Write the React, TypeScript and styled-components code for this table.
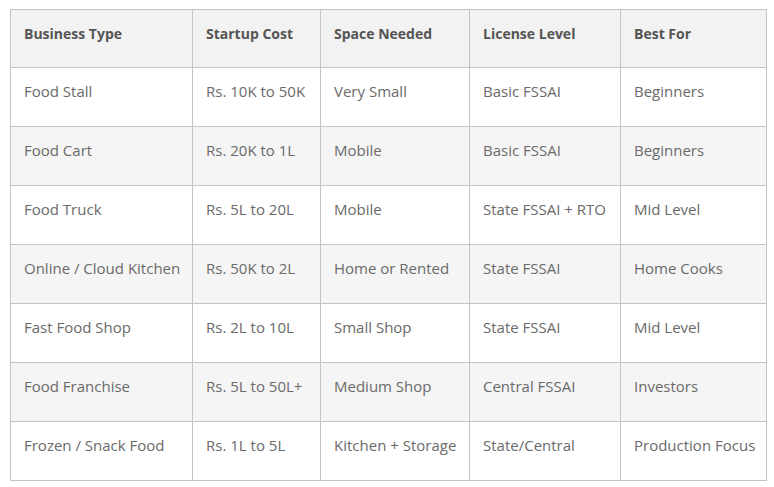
import React from 'react';
import styled, { createGlobalStyle } from 'styled-components';

const GlobalStyle = createGlobalStyle`
  body {
    margin: 0;
    background: #ffffff;
    font-family: "Open Sans", "Liberation Sans", sans-serif;
  }
`;

const Wrapper = styled.div`
  padding: 9px 9px 0 10px;
`;

const Table = styled.table`
  width: 756px;
  border-collapse: collapse;
  table-layout: fixed;
  color: #6a6a6a;
`;

const HeadCell = styled.th`
  background: #f2f2f2;
  color: #555555;
  font-size: 14px;
  font-weight: 700;
  text-align: left;
  line-height: 20px;
  padding: 14px 13px 23px;
  border: 1px solid #c4c4c4;
`;

const Row = styled.tr<{ $shaded: boolean }>`
  background: ${(p) => (p.$shaded ? '#f5f5f5' : '#ffffff')};
`;

const Cell = styled.td`
  font-size: 15px;
  line-height: 20px;
  padding: 13px 13px 25px;
  border: 1px solid #c4c4c4;
  white-space: nowrap;
`;

const columns = [
  { title: 'Business Type', width: 182 },
  { title: 'Startup Cost', width: 128 },
  { title: 'Space Needed', width: 149 },
  { title: 'License Level', width: 151 },
  { title: 'Best For', width: 146 },
];

const rows = [
  ['Food Stall', 'Rs. 10K to 50K', 'Very Small', 'Basic FSSAI', 'Beginners'],
  ['Food Cart', 'Rs. 20K to 1L', 'Mobile', 'Basic FSSAI', 'Beginners'],
  ['Food Truck', 'Rs. 5L to 20L', 'Mobile', 'State FSSAI + RTO', 'Mid Level'],
  ['Online / Cloud Kitchen', 'Rs. 50K to 2L', 'Home or Rented', 'State FSSAI', 'Home Cooks'],
  ['Fast Food Shop', 'Rs. 2L to 10L', 'Small Shop', 'State FSSAI', 'Mid Level'],
  ['Food Franchise', 'Rs. 5L to 50L+', 'Medium Shop', 'Central FSSAI', 'Investors'],
  ['Frozen / Snack Food', 'Rs. 1L to 5L', 'Kitchen + Storage', 'State/Central', 'Production Focus'],
];

function App() {
  return (
    <Wrapper>
      <GlobalStyle />
      <Table>
        <colgroup>
          {columns.map((c) => (
            <col key={c.title} style={{ width: c.width }} />
          ))}
        </colgroup>
        <thead>
          <tr>
            {columns.map((c) => (
              <HeadCell key={c.title}>{c.title}</HeadCell>
            ))}
          </tr>
        </thead>
        <tbody>
          {rows.map((r, i) => (
            <Row key={r[0]} $shaded={i % 2 === 1}>
              {r.map((v, j) => (
                <Cell key={j}>{v}</Cell>
              ))}
            </Row>
          ))}
        </tbody>
      </Table>
    </Wrapper>
  );
}

export default App;
